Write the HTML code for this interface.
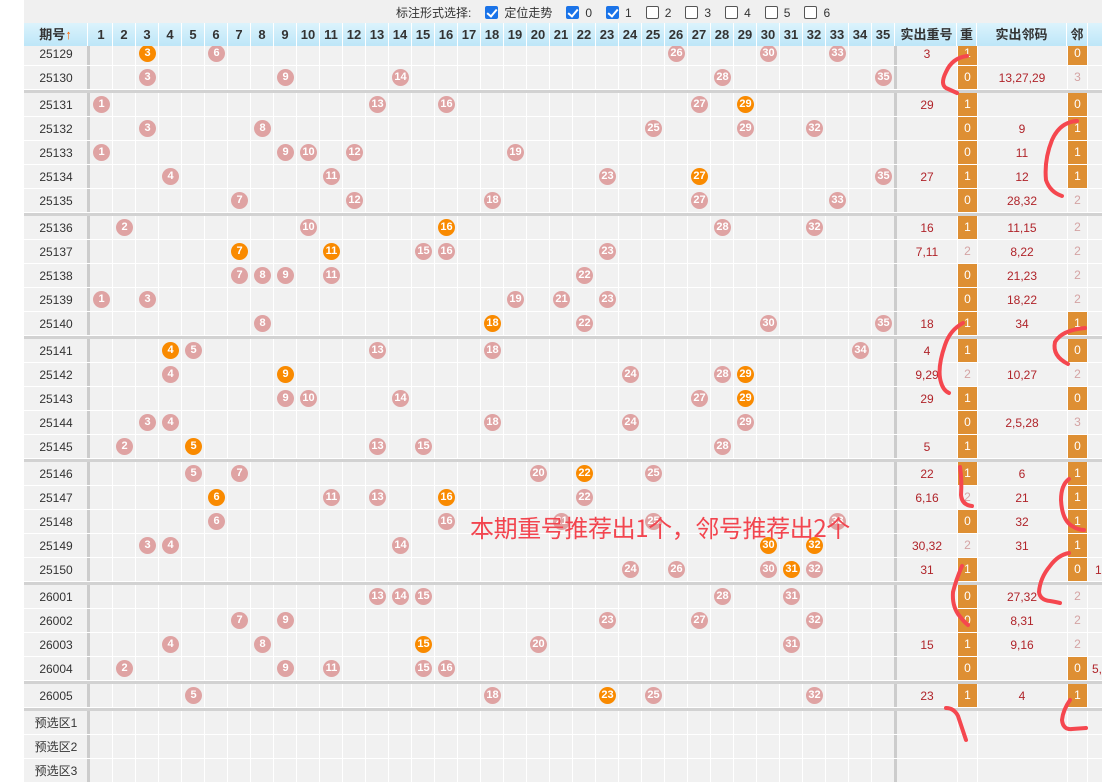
<!DOCTYPE html><html><head><meta charset="utf-8"><style>
*{margin:0;padding:0;box-sizing:border-box}
body{width:1102px;height:782px;position:relative;overflow:hidden;background:#fff;font-family:"Liberation Sans","Noto Sans CJK SC",sans-serif;font-size:12px;color:#333}
.a{position:absolute}
.top{left:24px;top:0;width:1078px;height:23px;background:#f0f0f0}
.hd{left:24px;top:23px;width:1078px;height:23px;background:linear-gradient(#dcf3fc,#bde6f8)}
.hd span{position:absolute;top:0;height:23px;line-height:23px;text-align:center;font-weight:bold;font-size:13px;color:#333;border-right:1px solid #fff}
.bd{left:24px;top:46px;width:1078px;height:736px;background:#f1f1f1}
.grid{left:90px;top:23px;width:805px;height:759px;background:repeating-linear-gradient(90deg,transparent 0 22px,#fff 22px 23px)}
.vl{top:46px;width:1px;height:736px;background:#fff}
.tk{top:23px;width:3px;height:759px;background:#ccc}
.sp{left:24px;width:1078px;height:3px;background:#d2d2d2}
.r{position:absolute;left:0;width:1102px;height:24px;box-shadow:inset 0 -1px #fff}
.r>*{position:absolute}
.i{left:24px;width:64px;text-align:center;line-height:24px;color:#333;font-size:12px}
.b{top:3px;width:17px;height:17px;border-radius:50%;background:#dfa3a3;color:#fff;font-weight:bold;font-size:11px;line-height:17px;text-align:center}
.o{background:#f98a00}
.c1{left:897px;width:60px;text-align:center;line-height:24px;color:#b0242a}
.c2{left:977px;width:90px;text-align:center;line-height:24px;color:#b0242a}
.z{left:958px;width:19px;height:23px;line-height:23px;text-align:center;color:#fff}
.l{left:1068px;width:19px;height:23px;line-height:23px;text-align:center;color:#fff}
.f{background:#de8f33}
.g{color:#d4a3a3}
.cb{display:inline-block;width:13px;height:13px;border:1px solid #555;border-radius:2px;background:#fff;vertical-align:-2px;margin:0 6px 0 14px}
.ck{background:#1a73e8;border-color:#1a73e8;position:relative}
.ck:after{content:"";position:absolute;left:3px;top:0px;width:4px;height:8px;border:solid #fff;border-width:0 2px 2px 0;transform:rotate(40deg)}
</style></head><body>
<div class="a top"></div>
<div class="a" style="left:396px;top:4px;font-size:12px;color:#333;white-space:nowrap">标注形式选择:<span class="cb ck"></span>定位走势<span class="cb ck"></span>0<span class="cb ck"></span>1<span class="cb"></span>2<span class="cb"></span>3<span class="cb"></span>4<span class="cb"></span>5<span class="cb"></span>6</div>
<div class="a bd"></div>
<div class="a grid"></div>
<div class="a vl" style="left:957px"></div><div class="a vl" style="left:977px"></div><div class="a vl" style="left:1067px"></div><div class="a vl" style="left:1087px"></div>
<div class="a tk" style="left:87px"></div><div class="a tk" style="left:894px"></div>
<div class="a hd">
<span style="left:0;width:64px">期号<b style="color:#f60">↑</b></span>
<span style="left:66px;width:23px">1</span><span style="left:89px;width:23px">2</span><span style="left:112px;width:23px">3</span><span style="left:135px;width:23px">4</span><span style="left:158px;width:23px">5</span><span style="left:181px;width:23px">6</span><span style="left:204px;width:23px">7</span><span style="left:227px;width:23px">8</span><span style="left:250px;width:23px">9</span><span style="left:273px;width:23px">10</span><span style="left:296px;width:23px">11</span><span style="left:319px;width:23px">12</span><span style="left:342px;width:23px">13</span><span style="left:365px;width:23px">14</span><span style="left:388px;width:23px">15</span><span style="left:411px;width:23px">16</span><span style="left:434px;width:23px">17</span><span style="left:457px;width:23px">18</span><span style="left:480px;width:23px">19</span><span style="left:503px;width:23px">20</span><span style="left:526px;width:23px">21</span><span style="left:549px;width:23px">22</span><span style="left:572px;width:23px">23</span><span style="left:595px;width:23px">24</span><span style="left:618px;width:23px">25</span><span style="left:641px;width:23px">26</span><span style="left:664px;width:23px">27</span><span style="left:687px;width:23px">28</span><span style="left:710px;width:23px">29</span><span style="left:733px;width:23px">30</span><span style="left:756px;width:23px">31</span><span style="left:779px;width:23px">32</span><span style="left:802px;width:23px">33</span><span style="left:825px;width:23px">34</span><span style="left:848px;width:23px">35</span>
<span style="left:873px;width:60px">实出重号</span><span style="left:933px;width:20px">重</span><span style="left:953px;width:90px">实出邻码</span><span style="left:1043px;width:21px">邻</span><span style="left:1064px;width:14px;border:0"></span>
</div>

<div class="a sp" style="top:90px"></div><div class="a sp" style="top:213px"></div><div class="a sp" style="top:336px"></div><div class="a sp" style="top:459px"></div><div class="a sp" style="top:582px"></div><div class="a sp" style="top:681px"></div><div class="a sp" style="top:708px"></div>

<div class="r" style="top:42px;clip-path:inset(4px 0 0 0)"><span class="i">25129</span><b class="b o" style="left:139px">3</b><b class="b" style="left:208px">6</b><b class="b" style="left:668px">26</b><b class="b" style="left:760px">30</b><b class="b" style="left:829px">33</b><span class="c1">3</span><span class="z f">1</span><span class="l f">0</span></div>
<div class="r" style="top:66px"><span class="i">25130</span><b class="b" style="left:139px">3</b><b class="b" style="left:277px">9</b><b class="b" style="left:392px">14</b><b class="b" style="left:714px">28</b><b class="b" style="left:875px">35</b><span class="z f">0</span><span class="c2">13,27,29</span><span class="l g">3</span></div>

<div class="r" style="top:93px"><span class="i">25131</span><b class="b" style="left:93px">1</b><b class="b" style="left:369px">13</b><b class="b" style="left:438px">16</b><b class="b" style="left:691px">27</b><b class="b o" style="left:737px">29</b><span class="c1">29</span><span class="z f">1</span><span class="l f">0</span></div>
<div class="r" style="top:117px"><span class="i">25132</span><b class="b" style="left:139px">3</b><b class="b" style="left:254px">8</b><b class="b" style="left:645px">25</b><b class="b" style="left:737px">29</b><b class="b" style="left:806px">32</b><span class="z f">0</span><span class="c2">9</span><span class="l f">1</span></div>
<div class="r" style="top:141px"><span class="i">25133</span><b class="b" style="left:93px">1</b><b class="b" style="left:277px">9</b><b class="b" style="left:300px">10</b><b class="b" style="left:346px">12</b><b class="b" style="left:507px">19</b><span class="z f">0</span><span class="c2">11</span><span class="l f">1</span></div>
<div class="r" style="top:165px"><span class="i">25134</span><b class="b" style="left:162px">4</b><b class="b" style="left:323px">11</b><b class="b" style="left:599px">23</b><b class="b o" style="left:691px">27</b><b class="b" style="left:875px">35</b><span class="c1">27</span><span class="z f">1</span><span class="c2">12</span><span class="l f">1</span></div>
<div class="r" style="top:189px"><span class="i">25135</span><b class="b" style="left:231px">7</b><b class="b" style="left:346px">12</b><b class="b" style="left:484px">18</b><b class="b" style="left:691px">27</b><b class="b" style="left:829px">33</b><span class="z f">0</span><span class="c2">28,32</span><span class="l g">2</span></div>

<div class="r" style="top:216px"><span class="i">25136</span><b class="b" style="left:116px">2</b><b class="b" style="left:300px">10</b><b class="b o" style="left:438px">16</b><b class="b" style="left:714px">28</b><b class="b" style="left:806px">32</b><span class="c1">16</span><span class="z f">1</span><span class="c2">11,15</span><span class="l g">2</span></div>
<div class="r" style="top:240px"><span class="i">25137</span><b class="b o" style="left:231px">7</b><b class="b o" style="left:323px">11</b><b class="b" style="left:415px">15</b><b class="b" style="left:438px">16</b><b class="b" style="left:599px">23</b><span class="c1">7,11</span><span class="z g">2</span><span class="c2">8,22</span><span class="l g">2</span></div>
<div class="r" style="top:264px"><span class="i">25138</span><b class="b" style="left:231px">7</b><b class="b" style="left:254px">8</b><b class="b" style="left:277px">9</b><b class="b" style="left:323px">11</b><b class="b" style="left:576px">22</b><span class="z f">0</span><span class="c2">21,23</span><span class="l g">2</span></div>
<div class="r" style="top:288px"><span class="i">25139</span><b class="b" style="left:93px">1</b><b class="b" style="left:139px">3</b><b class="b" style="left:507px">19</b><b class="b" style="left:553px">21</b><b class="b" style="left:599px">23</b><span class="z f">0</span><span class="c2">18,22</span><span class="l g">2</span></div>
<div class="r" style="top:312px"><span class="i">25140</span><b class="b" style="left:254px">8</b><b class="b o" style="left:484px">18</b><b class="b" style="left:576px">22</b><b class="b" style="left:760px">30</b><b class="b" style="left:875px">35</b><span class="c1">18</span><span class="z f">1</span><span class="c2">34</span><span class="l f">1</span></div>

<div class="r" style="top:339px"><span class="i">25141</span><b class="b o" style="left:162px">4</b><b class="b" style="left:185px">5</b><b class="b" style="left:369px">13</b><b class="b" style="left:484px">18</b><b class="b" style="left:852px">34</b><span class="c1">4</span><span class="z f">1</span><span class="l f">0</span></div>
<div class="r" style="top:363px"><span class="i">25142</span><b class="b" style="left:162px">4</b><b class="b o" style="left:277px">9</b><b class="b" style="left:622px">24</b><b class="b" style="left:714px">28</b><b class="b o" style="left:737px">29</b><span class="c1">9,29</span><span class="z g">2</span><span class="c2">10,27</span><span class="l g">2</span></div>
<div class="r" style="top:387px"><span class="i">25143</span><b class="b" style="left:277px">9</b><b class="b" style="left:300px">10</b><b class="b" style="left:392px">14</b><b class="b" style="left:691px">27</b><b class="b o" style="left:737px">29</b><span class="c1">29</span><span class="z f">1</span><span class="l f">0</span></div>
<div class="r" style="top:411px"><span class="i">25144</span><b class="b" style="left:139px">3</b><b class="b" style="left:162px">4</b><b class="b" style="left:484px">18</b><b class="b" style="left:622px">24</b><b class="b" style="left:737px">29</b><span class="z f">0</span><span class="c2">2,5,28</span><span class="l g">3</span></div>
<div class="r" style="top:435px"><span class="i">25145</span><b class="b" style="left:116px">2</b><b class="b o" style="left:185px">5</b><b class="b" style="left:369px">13</b><b class="b" style="left:415px">15</b><b class="b" style="left:714px">28</b><span class="c1">5</span><span class="z f">1</span><span class="l f">0</span></div>

<div class="r" style="top:462px"><span class="i">25146</span><b class="b" style="left:185px">5</b><b class="b" style="left:231px">7</b><b class="b" style="left:530px">20</b><b class="b o" style="left:576px">22</b><b class="b" style="left:645px">25</b><span class="c1">22</span><span class="z f">1</span><span class="c2">6</span><span class="l f">1</span></div>
<div class="r" style="top:486px"><span class="i">25147</span><b class="b o" style="left:208px">6</b><b class="b" style="left:323px">11</b><b class="b" style="left:369px">13</b><b class="b o" style="left:438px">16</b><b class="b" style="left:576px">22</b><span class="c1">6,16</span><span class="z g">2</span><span class="c2">21</span><span class="l f">1</span></div>
<div class="r" style="top:510px"><span class="i">25148</span><b class="b" style="left:208px">6</b><b class="b" style="left:438px">16</b><b class="b" style="left:553px">21</b><b class="b" style="left:645px">25</b><b class="b" style="left:829px">33</b><span class="z f">0</span><span class="c2">32</span><span class="l f">1</span></div>
<div class="r" style="top:534px"><span class="i">25149</span><b class="b" style="left:139px">3</b><b class="b" style="left:162px">4</b><b class="b" style="left:392px">14</b><b class="b o" style="left:760px">30</b><b class="b o" style="left:806px">32</b><span class="c1">30,32</span><span class="z g">2</span><span class="c2">31</span><span class="l f">1</span></div>
<div class="r" style="top:558px"><span class="i">25150</span><b class="b" style="left:622px">24</b><b class="b" style="left:668px">26</b><b class="b" style="left:760px">30</b><b class="b o" style="left:783px">31</b><b class="b" style="left:806px">32</b><span class="c1">31</span><span class="z f">1</span><span class="l f">0</span><span style="left:1095px;line-height:24px;color:#b0242a">1</span></div>

<div class="r" style="top:585px"><span class="i">26001</span><b class="b" style="left:369px">13</b><b class="b" style="left:392px">14</b><b class="b" style="left:415px">15</b><b class="b" style="left:714px">28</b><b class="b" style="left:783px">31</b><span class="z f">0</span><span class="c2">27,32</span><span class="l g">2</span></div>
<div class="r" style="top:609px"><span class="i">26002</span><b class="b" style="left:231px">7</b><b class="b" style="left:277px">9</b><b class="b" style="left:599px">23</b><b class="b" style="left:691px">27</b><b class="b" style="left:806px">32</b><span class="z f">0</span><span class="c2">8,31</span><span class="l g">2</span></div>
<div class="r" style="top:633px"><span class="i">26003</span><b class="b" style="left:162px">4</b><b class="b" style="left:254px">8</b><b class="b o" style="left:415px">15</b><b class="b" style="left:530px">20</b><b class="b" style="left:783px">31</b><span class="c1">15</span><span class="z f">1</span><span class="c2">9,16</span><span class="l g">2</span></div>
<div class="r" style="top:657px"><span class="i">26004</span><b class="b" style="left:116px">2</b><b class="b" style="left:277px">9</b><b class="b" style="left:323px">11</b><b class="b" style="left:415px">15</b><b class="b" style="left:438px">16</b><span class="z f">0</span><span class="l f">0</span><span style="left:1092px;line-height:24px;color:#b0242a">5,</span></div>

<div class="r" style="top:684px"><span class="i">26005</span><b class="b" style="left:185px">5</b><b class="b" style="left:484px">18</b><b class="b o" style="left:599px">23</b><b class="b" style="left:645px">25</b><b class="b" style="left:806px">32</b><span class="c1">23</span><span class="z f">1</span><span class="c2">4</span><span class="l f">1</span></div>

<div class="r" style="top:711px"><span class="i">预选区1</span></div>
<div class="r" style="top:735px"><span class="i">预选区2</span></div>
<div class="r" style="top:759px"><span class="i">预选区3</span></div>

<div class="a" style="left:470px;top:512px;font-size:24px;color:#f2454f;white-space:nowrap;font-family:'Noto Sans CJK SC',sans-serif;line-height:30px;letter-spacing:-0.4px">本期重号推荐出1个，邻号推荐出2个</div>

<svg class="a" style="left:0;top:0" width="1102" height="782" fill="none" stroke="#f5474f" stroke-width="4" stroke-linecap="round" stroke-linejoin="round">
<path d="M967 56 Q952 58 946 72 Q940 84 946 88 L957 93"/>
<path d="M1077 121 Q1060 122 1052 140 Q1044 160 1046 180 Q1050 192 1062 196"/>
<path d="M963 323 Q950 330 945 345 Q938 365 940 378 Q942 390 949 393"/>
<path d="M1085 328 Q1062 330 1055 342 Q1052 356 1068 364"/>
<path d="M960 467 Q962 480 961 495 Q962 505 972 506"/>
<path d="M1069 479 Q1061 485 1061 500 Q1062 520 1072 526 Q1078 530 1084 530"/>
<path d="M962 566 Q956 580 953 592 Q952 605 958 614 Q964 622 968 625"/>
<path d="M1069 553 Q1058 555 1050 566 Q1040 578 1039 592 Q1040 600 1050 601 Q1056 602 1060 603"/>
<path d="M946 708 Q954 708 958 716 Q962 728 966 740"/>
<path d="M1070 700 Q1063 710 1062 720 Q1063 730 1072 729 L1086 728"/>
</svg>
</body></html>
